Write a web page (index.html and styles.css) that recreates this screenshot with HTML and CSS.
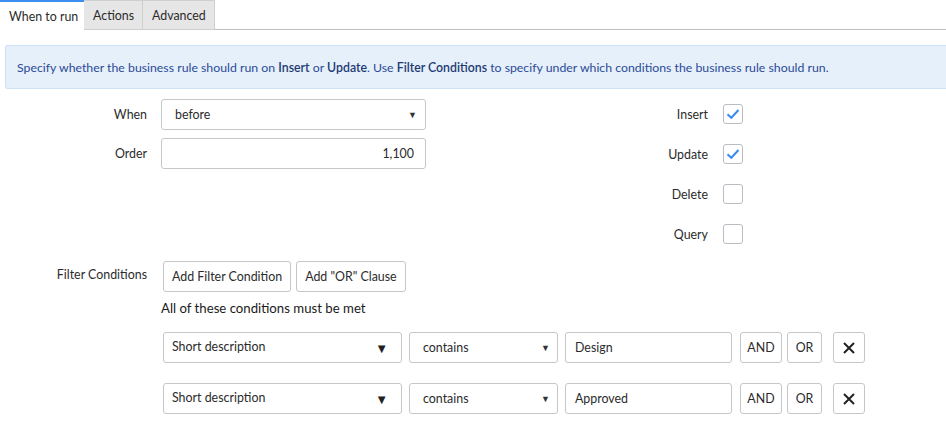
FILE: index.html
```html
<!DOCTYPE html>
<html>
<head>
<meta charset="utf-8">
<link rel="stylesheet" href="styles.css">
</head>
<body>
<div class="tabs">
  <div class="tab active">When to run</div>
  <div class="tab">Actions</div>
  <div class="tab">Advanced</div>
  <div class="tab-fill"></div>
</div>
<div class="info">Specify whether the business rule should run on&nbsp;<b>Insert</b>&nbsp;or&nbsp;<b>Update</b>. Use&nbsp;<b>Filter Conditions</b>&nbsp;to specify under which conditions the business rule should run.</div>
<div class="form">
  <div class="left">
    <div class="row">
      <div class="label">When</div>
      <div class="control select"><span>before</span><span class="caret-sm">&#9660;</span></div>
    </div>
    <div class="row">
      <div class="label">Order</div>
      <div class="control input right">1,100</div>
    </div>
  </div>
  <div class="right-col">
    <div class="crow"><div class="clabel">Insert</div><div class="cb"><svg viewBox="0 0 18 18" width="18" height="18"><path d="M3.5 9.2 L7.3 12.8 L14.5 5" fill="none" stroke="#3a8cf0" stroke-width="2"/></svg></div></div>
    <div class="crow"><div class="clabel">Update</div><div class="cb"><svg viewBox="0 0 18 18" width="18" height="18"><path d="M3.5 9.2 L7.3 12.8 L14.5 5" fill="none" stroke="#3a8cf0" stroke-width="2"/></svg></div></div>
    <div class="crow"><div class="clabel">Delete</div><div class="cb"></div></div>
    <div class="crow"><div class="clabel">Query</div><div class="cb"></div></div>
  </div>
</div>
<div class="filter">
  <div class="flabel">Filter Conditions</div>
  <div class="fbody">
    <div class="btns">
      <div class="btn">Add Filter Condition</div>
      <div class="btn">Add "OR" Clause</div>
    </div>
    <div class="met">All of these conditions must be met</div>
    <div class="cond">
      <div class="box field"><span>Short description</span><span class="caret-lg">&#9660;</span></div>
      <div class="box op"><span>contains</span><span class="caret-sm">&#9660;</span></div>
      <div class="box val">Design</div>
      <div class="btn sm and">AND</div>
      <div class="btn sm or">OR</div>
      <div class="btn sm x"><svg viewBox="0 0 14 14" width="14" height="14"><path d="M2 2 L12 12 M12 2 L2 12" stroke="#222" stroke-width="2"/></svg></div>
    </div>
    <div class="cond">
      <div class="box field"><span>Short description</span><span class="caret-lg">&#9660;</span></div>
      <div class="box op"><span>contains</span><span class="caret-sm">&#9660;</span></div>
      <div class="box val">Approved</div>
      <div class="btn sm and">AND</div>
      <div class="btn sm or">OR</div>
      <div class="btn sm x"><svg viewBox="0 0 14 14" width="14" height="14"><path d="M2 2 L12 12 M12 2 L2 12" stroke="#222" stroke-width="2"/></svg></div>
    </div>
  </div>
</div>
</body>
</html>
```
FILE: styles.css
```css
* { box-sizing: border-box; }
body {
  margin: 0;
  width: 946px;
  overflow: hidden;
  font-family: "Lato", "Liberation Sans", sans-serif;
  font-size: 12.4px;
  color: #2b2b2b;
  background: #fff;
}
.tabs {
  display: flex;
  height: 30px;
}
.tab {
  height: 30px;
  padding: 1px 0 0 9px;
  display: flex;
  align-items: center;
  white-space: nowrap;
  background: #e6e6e6;
  border: 1px solid #cfcfcf;
  border-left: none;
  color: #2b2b2b;
}
.tab.active {
  background: #fff;
  border-top: 2px solid #3c8ef0;
  border-right: none;
  border-bottom: none;
  width: 84px;
}
.tab:nth-child(2) { width: 59px; }
.tab:nth-child(3) { width: 72px; }
.tab-fill {
  flex: 1;
  border-bottom: 1px solid #bdbdbd;
  height: 30px;
}
.info {
  margin: 15px 0 0 5px;
  height: 44px;
  background: #e5f0fa;
  border: 1px solid #cde1f6;
  border-right: none;
  border-radius: 3px 0 0 3px;
  color: #2c4a98;
  padding: 0 0 0 11px;
  display: flex;
  align-items: center;
  white-space: nowrap;
  font-size: 12.3px;
}
.info b { font-weight: 600; color: #1e3a74; }
.form {
  display: flex;
  margin-top: 10px;
}
.left {
  width: 428px;
  display: flex;
  flex-direction: column;
  gap: 8px;
}
.row {
  display: flex;
  align-items: center;
}
.label {
  width: 147px;
  text-align: right;
}
.control {
  margin-left: 14px;
  width: 265px;
  height: 31px;
  border: 1px solid #c4c6c9;
  border-radius: 3px;
  display: flex;
  align-items: center;
  padding: 0 12px;
}
.select { justify-content: space-between; padding: 0 8px 0 13px; }
.right { justify-content: flex-end; padding-right: 11px; }
.caret-sm { font-size: 9px; color: #333; }
.caret-lg { font-size: 13px; color: #222; }
.right-col {
  margin-left: 165px;
  display: flex;
  flex-direction: column;
  margin-top: -5px;
}
.crow {
  display: flex;
  align-items: center;
  height: 40px;
}
.clabel {
  width: 115px;
  text-align: right;
  margin-right: 15px;
}
.cb {
  width: 20px;
  height: 20px;
  border: 1px solid #b9bcc0;
  border-radius: 3px;
  display: flex;
  align-items: center;
  justify-content: center;
}
.filter {
  display: flex;
  margin-top: 7px;
}
.flabel {
  width: 147px;
  text-align: right;
  padding-top: 6px;
}
.fbody {
  margin-left: 16px;
}
.btns { display: flex; gap: 5px; }
.btn {
  height: 31px;
  border: 1px solid #c4c6c9;
  border-radius: 3px;
  padding: 0 8px;
  display: flex;
  align-items: center;
  justify-content: center;
  background: #fff;
}
.met {
  margin: 8px 0 0 -2px;
  font-size: 13.2px;
  color: #1a1a1a;
  height: 20px;
}
.cond {
  display: flex;
  margin-top: 12px;
}
.cond + .cond { margin-top: 20px; }
.box {
  height: 31px;
  border: 1px solid #c4c6c9;
  border-radius: 3px;
  display: flex;
  align-items: center;
}
.field { width: 239px; justify-content: space-between; padding: 0 13px 3px 8px; }
.field .caret-lg { padding-top: 4px; }
.op { width: 149px; margin-left: 7px; justify-content: space-between; padding: 0 7px 0 13px; }
.val { width: 167px; margin-left: 7px; padding: 0 9px; }
.sm { padding: 0; }
.and { width: 42px; margin-left: 8px; }
.or { width: 35px; margin-left: 5px; }
.x { width: 32px; margin-left: 11px; }
```
